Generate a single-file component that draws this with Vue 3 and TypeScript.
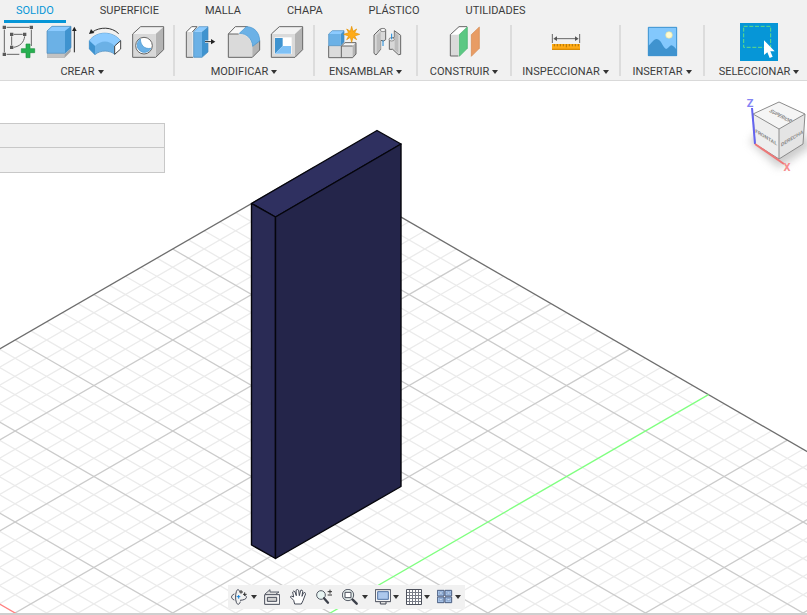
<script setup lang="ts">
import { ref } from 'vue'

interface GridLine {
  x1: number
  y1: number
  x2: number
  y2: number
  kind: 'minor' | 'major' | 'edge' | 'axis-x' | 'axis-y'
}

const tabs: string[] = ['SOLIDO', 'SUPERFICIE', 'MALLA', 'CHAPA', 'PLÁSTICO', 'UTILIDADES']
const activeTab = ref<string>('SOLIDO')

// Isometric ground plane: far corner and the step between neighbouring lines.
const corner = { x: 314.5, y: 167.1 }
const step = { x: 15.76, y: 9.1 }
const reach = 64

const minor: GridLine[] = []
const strong: GridLine[] = []

function addLine(line: GridLine): void {
  if (line.kind === 'minor') minor.push(line)
  else strong.push(line)
}

for (let k = 0; k <= reach; k++) {
  const rx = corner.x + step.x * k
  const lx = corner.x - step.x * k
  const y = corner.y + step.y * k
  addLine({
    x1: rx, y1: y, x2: rx - step.x * reach, y2: y + step.y * reach,
    kind: k === 0 ? 'edge' : k === 25 ? 'axis-y' : k % 5 === 0 ? 'major' : 'minor',
  })
  addLine({
    x1: lx, y1: y, x2: lx + step.x * reach, y2: y + step.y * reach,
    kind: k === 0 ? 'edge' : k === 34 ? 'axis-x' : k % 5 === 4 ? 'major' : 'minor',
  })
}
strong.sort((a, b) => Number(a.kind !== 'major') - Number(b.kind !== 'major'))
</script>

<template>
  <div class="app">
    <header class="ribbon">
      <nav class="tabs">
        <button
          v-for="tab in tabs"
          :key="tab"
          type="button"
          class="tab"
          :class="{ active: tab === activeTab }"
          @click="activeTab = tab"
        >{{ tab }}</button>
      </nav>

      <div class="groups">
        <section class="group first">
          <div class="icons">
            <button type="button" class="tool" aria-label="Crear boceto">
              <svg viewBox="3 75 102 102">
                <path d="M20 82H88M13 89V157M94 89V138M20 163H58M41 103H68M35 109V136M74 109C72 127 60 139 41 142" fill="none" stroke="#666" stroke-width="3" />
                <path d="M8 77h10v10H8zM89 77h10v10H89zM8 158h10v10H8zM30 98h10v10H30zM69 98h10v10H69zM30 137h10v10H30z" fill="#5a5a5a" />
                <path d="M78 132h12v14h14v12H90v15H78v-15H64v-12h14z" fill="#26b050" stroke="#1c923f" stroke-width="2" />
              </svg>
            </button>
            <button type="button" class="tool" aria-label="Extruir">
              <svg viewBox="132 75 102 102">
                <path d="M141 163H194L212 146V155L194 173H141z" fill="#a5a5a5" />
                <path d="M141 160H194V173H141z" fill="#c3c3c3" />
                <path d="M141 93L156 79H213V143L195 160H141z" fill="#6bb1e6" />
                <path d="M141 93L156 79H213L195 93z" fill="#8ccbff" />
                <path d="M195 93L213 79V143L195 160z" fill="#3f93cf" />
                <path d="M141 93L156 79H213V143L195 160H141z" fill="none" stroke="#4b87b5" stroke-width="2" />
                <path d="M223 157V88" stroke="#222" stroke-width="3" />
                <path d="M216 93L223 80L230 93z" fill="#222" />
              </svg>
            </button>
            <button type="button" class="tool" aria-label="Revolución">
              <svg viewBox="261 75 102 102">
                <path d="M356 101C335 80 300 80 277 96" fill="none" stroke="#333" stroke-width="3" />
                <path d="M267 102L273 87L283 99z" fill="#222" />
                <path d="M268 122C290 92 338 92 362 122L344 138V163C330 151 302 149 285 164L268 147z" fill="#6bb1e6" stroke="#4589bc" stroke-width="2" />
                <path d="M268 122C290 92 338 92 362 122L344 138C328 120 302 120 285 138z" fill="#8ccbff" />
                <path d="M268 122L285 138V164L268 147z" fill="#3f93cf" />
                <path d="M344 138L362 122V147L344 163z" fill="#fff" stroke="#444" stroke-width="3" />
              </svg>
            </button>
            <button type="button" class="tool" aria-label="Agujero">
              <svg viewBox="390 75 102 102">
                <path d="M398 102L422 80H491L467 102z" fill="#f2f2f2" />
                <path d="M467 102L491 80V149L467 172z" fill="#b4b4b4" />
                <path d="M398 102H467V172H398z" fill="#d8d8d8" />
                <path d="M398 102L422 80H491V149L467 172H398z" fill="none" stroke="#666" stroke-width="3" />
                <circle cx="432" cy="137" r="25" fill="#fff" stroke="#666" stroke-width="3" />
                <path d="M421 117C422 136 433 148 453 145A22 22 0 1 1 421 117z" fill="#6bb1e6" stroke="#3f93cf" stroke-width="2" />
              </svg>
            </button>
          </div>
          <button type="button" class="label">CREAR<span class="caret"></span></button>
        </section>

        <section class="group">
          <div class="icons">
            <button type="button" class="tool" aria-label="Pulsar o tirar">
              <svg viewBox="45 75 102 102">
                <path d="M52 96L68 80H84L70 96V172H52z" fill="#dadada" />
                <path d="M52 96L68 80H84L70 96z" fill="#fff" />
                <path d="M72 172H52V96L68 80H84L70 96" fill="none" stroke="#666" stroke-width="3" />
                <path d="M74 95H99V172H74z" fill="#6bb1e6" />
                <path d="M74 95L90 80H117L99 95z" fill="#8ccbff" />
                <path d="M99 95L117 80V156L99 172z" fill="#3f93cf" />
                <path d="M74 95L90 80H117V156L99 172H74z" fill="none" stroke="#4589bc" stroke-width="2" />
                <path d="M108 125H130" stroke="#fff" stroke-width="7" />
                <path d="M108 125H130" stroke="#222" stroke-width="3" />
                <path d="M126 117L139 125L126 133z" fill="#222" />
              </svg>
            </button>
            <button type="button" class="tool" aria-label="Empalme">
              <svg viewBox="174 75 102 102">
                <path d="M178 102L199 80H231L209 102z" fill="#f8f8f8" />
                <path d="M178 102H209C233 102 249 118 250 144V172H178z" fill="#dadada" />
                <path d="M250 138L272 119V150L250 172z" fill="#b4b4b4" />
                <path d="M178 102L199 80H236M178 102V172H250L272 150V122M178 102H209" fill="none" stroke="#666" stroke-width="3" />
                <path d="M211 100L232 80C255 80 272 97 272 123L251 139C249 116 234 101 211 100z" fill="#6bb1e6" stroke="#3f93cf" stroke-width="2" />
              </svg>
            </button>
            <button type="button" class="tool" aria-label="Vaciado">
              <svg viewBox="303 75 102 102">
                <path d="M307 102L331 80H401L378 102z" fill="#f2f2f2" />
                <path d="M378 102L401 80V149L378 172z" fill="#b4b4b4" />
                <path d="M307 102H378V172H307z" fill="#dadada" />
                <path d="M307 102L331 80H401V149L378 172H307z" fill="none" stroke="#666" stroke-width="3" />
                <path d="M317 112H368V162H317z" fill="#fff" />
                <path d="M318 114H341V138L318 161z" fill="#3f93cf" />
                <path d="M318 161L341 138H366V161z" fill="#7fc1f6" />
              </svg>
            </button>
          </div>
          <button type="button" class="label">MODIFICAR<span class="caret"></span></button>
        </section>

        <section class="group">
          <div class="icons">
            <button type="button" class="tool" aria-label="Nuevo componente">
              <svg viewBox="53 75 102 102">
                <path d="M58 137H130L140 128V162L130 173H58z" fill="#dcdcdc" />
                <path d="M97 137L107 128H140L130 137z" fill="#f8f8f8" />
                <path d="M130 137L140 128V162L130 173z" fill="#b4b4b4" />
                <path d="M58 137V173H130L140 162V128H107L96 138V173M96 138H130" fill="none" stroke="#666" stroke-width="3" />
                <path d="M58 102H94V137H58z" fill="#6bb1e6" />
                <path d="M58 102L69 92H104L94 102z" fill="#8ccbff" />
                <path d="M94 102L104 92V126L94 137z" fill="#3f93cf" />
                <path d="M58 102L69 92H104V126L94 137H58z" fill="none" stroke="#4589bc" stroke-width="2" />
                <path d="M127 79L131 94L142 87L136 98L151 103L136 108L142 119L131 112L127 127L123 112L112 119L118 108L103 103L118 98L112 87L123 94z" fill="#ffab16" stroke="#e49100" stroke-width="2" />
              </svg>
            </button>
            <button type="button" class="tool" aria-label="Unión">
              <svg viewBox="182 75 102 102">
                <path d="M194 105L211 88Q222 82 229 89V119Q224 126 214 121V148L200 165L194 160z" fill="#d8d8d8" stroke="#666" stroke-width="3" />
                <path d="M202 106L214 94V146L202 159z" fill="#bdbdbd" />
                <ellipse cx="221" cy="90" rx="8" ry="5" fill="#f5f5f5" stroke="#666" stroke-width="2" />
                <path d="M221 121V138" stroke="#1686d9" stroke-width="3" />
                <path d="M255 92L274 106V163L267 164L250 148H240V118L255 112z" fill="#d8d8d8" stroke="#666" stroke-width="3" />
                <path d="M256 96L267 106V158L256 149z" fill="#bdbdbd" />
                <ellipse cx="247" cy="118" rx="8" ry="5" fill="#eee" stroke="#666" stroke-width="2" />
                <path d="M247 101V118" stroke="#1686d9" stroke-width="3" />
              </svg>
            </button>
          </div>
          <button type="button" class="label">ENSAMBLAR<span class="caret"></span></button>
        </section>

        <section class="group">
          <div class="icons">
            <button type="button" class="tool" aria-label="Plano de desfase">
              <svg viewBox="412 75 102 102">
                <path d="M422 104L448 80H472L446 104V168H422z" fill="#dadada" />
                <path d="M422 104L448 80H472L446 104z" fill="#fff" />
                <path d="M446 168H422V104L448 80H472" fill="none" stroke="#666" stroke-width="3" />
                <path d="M449 104L473 81V145L449 169z" fill="#5bc883" stroke="#3fae68" stroke-width="2" />
                <path d="M485 104L509 81V145L485 169z" fill="#e89c64" stroke="#d58549" stroke-width="2" />
              </svg>
            </button>
          </div>
          <button type="button" class="label">CONSTRUIR<span class="caret"></span></button>
        </section>

        <section class="group">
          <div class="icons">
            <button type="button" class="tool" aria-label="Medir">
              <svg viewBox="147 75 102 102">
                <path d="M157 102V129M239 102V129M166 116H230" fill="none" stroke="#666" stroke-width="3" />
                <path d="M160 116L171 109V123zM236 116L225 109V123z" fill="#555" />
                <path d="M156 132H240V150H156z" fill="#ffab16" />
                <path d="M156 148H240" stroke="#d98c05" stroke-width="4" />
                <path d="M163 132v7M172 132v7M181 132v7M190 132v7M199 132v10M208 132v7M217 132v7M226 132v7M235 132v7" stroke="#8a5a00" stroke-width="2" />
              </svg>
            </button>
          </div>
          <button type="button" class="label">INSPECCIONAR<span class="caret"></span></button>
        </section>

        <section class="group">
          <div class="icons">
            <button type="button" class="tool" aria-label="Insertar imagen">
              <svg viewBox="435 75 102 102">
                <path d="M444 81H531V168H444z" fill="#83c8fd" />
                <path d="M444 138C456 130 460 117 470 117C484 118 488 142 498 147C505 147 508 136 515 136C521 137 525 145 531 149V168H444z" fill="#3f93cf" />
                <path d="M445 82H530V167H445z" fill="none" stroke="#3f93cf" stroke-width="3" />
                <circle cx="507" cy="105" r="10" fill="#fffbd0" stroke="#e2df9f" stroke-width="2" />
              </svg>
            </button>
          </div>
          <button type="button" class="label">INSERTAR<span class="caret"></span></button>
        </section>

        <section class="group last">
          <div class="icons">
            <button type="button" class="tool selected" aria-label="Seleccionar">
              <svg viewBox="720 69 114 114">
                <path d="M731 79H812V142H731z" fill="none" stroke="#62dc85" stroke-width="3" stroke-dasharray="12 5" />
                <path d="M792 121V165L802 157L809 174L818 170L811 154H824z" fill="#fff" />
              </svg>
            </button>
          </div>
          <button type="button" class="label">SELECCIONAR<span class="caret"></span></button>
        </section>
      </div>
    </header>

    <main class="viewport">
      <svg class="scene" viewBox="0 81 807 532" preserveAspectRatio="xMidYMid slice" role="img" aria-label="Modelo">
        <line v-for="(l, i) in minor" :key="'m' + i" class="minor" :x1="l.x1" :y1="l.y1" :x2="l.x2" :y2="l.y2" />
        <line v-for="(l, i) in strong" :key="'s' + i" :class="l.kind" :x1="l.x1" :y1="l.y1" :x2="l.x2" :y2="l.y2" />
        <g class="solid">
          <path d="M251.500 203.500L377 130.500L401 144L275.500 217z" fill="#2f3060" />
          <path d="M251.500 203.500L275.500 217V558.500L251.500 545z" fill="#2a2b55" />
          <path d="M275.500 217L401 144V486.500L275.500 558.500z" fill="#24254a" />
        </g>
      </svg>

      <div class="panel">
        <div class="panel-row"></div>
        <div class="panel-row"></div>
      </div>

      <svg class="cube" viewBox="740 92 67 88" role="img" aria-label="Cubo de vistas">
        <defs>
          <filter id="soft" x="-30%" y="-30%" width="160%" height="160%"><feGaussianBlur stdDeviation="4" /></filter>
        </defs>
        <path d="M750 142L779 168L812 146L800 130H760z" fill="#999" opacity="0.500" filter="url(#soft)" />
        <path d="M753 114L779 102L805 114L779 129z" fill="#f5f5f5" />
        <path d="M753 114L779 129V159L755 144z" fill="#eee" />
        <path d="M779 129L805 114L803 144L779 159z" fill="#e4e4e4" />
        <path d="M753 114L779 102L805 114L803 144L779 159L755 144zM753 114L779 129L805 114M779 129V159" fill="none" stroke="#8c8c8c" stroke-width="1" />
        <g class="cube-text">
          <text transform="translate(779 117) rotate(28) skewX(-30)">SUPERIOR</text>
          <text transform="translate(766 139) skewY(31)">FRONTAL</text>
          <text transform="translate(792 140) skewY(-31)">DERECHA</text>
        </g>
        <path d="M752 108L755 144" stroke="#6464f0" stroke-width="2" />
        <path d="M755 144L784 164" stroke="#ee7777" stroke-width="2" />
        <text x="750" y="107" class="axis-label" fill="#8484f4">Z</text>
        <text x="787" y="171" class="axis-label" fill="#f78d8d">X</text>
      </svg>

      <div class="navbar">
        <button type="button" class="wide" aria-label="Órbita">
          <svg viewBox="33 42 48 48">
            <path d="M59 50C57 42 51 42 49 50C46 60 46 73 49 82C52 90 58 90 61 80" fill="none" stroke="#454a57" stroke-width="3" />
            <path d="M43 57C32 61 32 71 43 75M76 61C84 68 77 75 60 76" fill="none" stroke="#454a57" stroke-width="3" />
            <path d="M63 45v11M58 51h11M74 52v11M69 58h11" stroke="#333" stroke-width="3" />
            <path d="M56 60v11M50 65h11" stroke="#1583d8" stroke-width="3" />
          </svg>
          <span class="caret"></span>
        </button>
        <button type="button" class="plain" aria-label="Mirar a">
          <svg viewBox="132 42 48 48">
            <path d="M134 59H179V88H134z" fill="#f7f7f7" stroke="#454a57" stroke-width="3" />
            <path d="M142 67H170V79H142z" fill="#d0d0d0" stroke="#454a57" stroke-width="3" />
            <path d="M135 57L150 44V51H177L168 57" fill="#ddd" stroke="#5b606c" stroke-width="3" />
          </svg>
        </button>
        <button type="button" class="plain" aria-label="Encuadre">
          <svg viewBox="210 42 48 48">
            <path d="M224 87L221 76L211 66Q212 60 221 66L218 51Q221 45 225 51L229 62L228 46Q232 41 236 46L238 62L242 46Q247 43 248 49L246 64L250 54Q256 50 257 56L249 77L244 87z" fill="#fff" stroke="#454a57" stroke-width="3" stroke-linejoin="round" />
          </svg>
        </button>
        <button type="button" class="plain" aria-label="Zoom">
          <svg viewBox="287 42 48 48">
            <circle cx="302" cy="60" r="13" fill="#e7f4f2" stroke="#555b66" stroke-width="3" />
            <path d="M311 70L323 83" stroke="#3b3f49" stroke-width="7" stroke-linecap="round" />
            <path d="M329 44V56M322 50H336M322 60H336" stroke="#333" stroke-width="3" />
          </svg>
        </button>
        <button type="button" class="wide" aria-label="Ajustar">
          <svg viewBox="366 42 48 48">
            <circle cx="384" cy="60" r="17" fill="#e7f0ee" stroke="#555b66" stroke-width="3" />
            <path d="M375 52H393V68H375z" fill="#fff" stroke="#454a57" stroke-width="3" />
            <path d="M398 74L410 86" stroke="#3b3f49" stroke-width="7" stroke-linecap="round" />
          </svg>
          <span class="caret"></span>
        </button>
        <button type="button" aria-label="Configuración de visualización">
          <svg viewBox="465 42 48 48">
            <path d="M466 44H512V80H466z" fill="#f5f5f5" stroke="#454a57" stroke-width="3" />
            <path d="M473 50H505V73H473z" fill="#adc8ec" stroke="#5274a3" stroke-width="3" />
            <path d="M481 81V87H498V81" fill="#ddd" stroke="#454a57" stroke-width="3" />
          </svg>
          <span class="caret"></span>
        </button>
        <button type="button" aria-label="Rejilla">
          <svg viewBox="558 42 48 48">
            <path d="M559.500 43.500H604.500V88.500H559.500z" fill="#fff" />
            <path d="M568.500 43V89M577.500 43V89M586.500 43V89M595.500 43V89M559 52.500H605M559 61.500H605M559 70.500H605M559 79.500H605" stroke="#777b86" stroke-width="3" />
            <path d="M559.500 43.500H604.500V88.500H559.500z" fill="none" stroke="#4d515c" stroke-width="3" />
          </svg>
          <span class="caret"></span>
        </button>
        <button type="button" aria-label="Ventanas">
          <svg viewBox="651 42 48 48">
            <path d="M652 46H672V63H652zM675 46H695V63H675zM652 66H672V83H652zM675 66H695V83H675z" fill="#a9c5ea" stroke="#4a5d7f" stroke-width="3" />
            <path d="M658 51H667V57H658zM681 51H690V57H681zM658 71H667V77H658zM681 71H690V77H681z" fill="#d5e4f7" stroke="#6f8fbd" stroke-width="2" />
          </svg>
          <span class="caret"></span>
        </button>
      </div>
    </main>
  </div>
</template>

<style>
body {
  margin: 0;
  background: #fff;
}
</style>

<style scoped>
.app {
  display: flex;
  flex-direction: column;
  height: 100vh;
  overflow: hidden;
  font-family: Roboto, "Liberation Sans", sans-serif;
  font-size: 11px;
  line-height: 14px;
  color: #3c3c3c;
}

button {
  margin: 0;
  padding: 0;
  border: 0;
  background: none;
  font: inherit;
  color: inherit;
}

svg {
  display: block;
}

.ribbon {
  flex: none;
  background: #f1f1f1;
  border-bottom: 1px solid #d9d9d9;
}

.tabs {
  display: flex;
  gap: 22px;
  padding-left: 4px;
}

.tab {
  box-sizing: border-box;
  height: 23px;
  padding: 2px 12px 0;
  border-bottom: 3px solid transparent;
  white-space: nowrap;
}

.tab.active {
  color: #0696d7;
  border-bottom-color: #0696d7;
}

.groups {
  display: grid;
  grid-template-columns: 175fr 140fr 103fr 94fr 109fr 84fr 102fr;
  height: 57px;
}

.group {
  position: relative;
  display: flex;
  flex-direction: column;
  align-items: center;
  gap: 4px;
  min-width: 0;
  padding-right: 2px;
}

.group::after {
  content: "";
  position: absolute;
  top: 2px;
  right: 0;
  bottom: 4px;
  width: 2px;
  background: #dcdcdc;
}

.first {
  padding-right: 11px;
}

.last {
  padding: 0 0 0 6px;
}

.last::after {
  display: none;
}

.icons {
  display: flex;
  align-items: center;
  gap: 9px;
  height: 38px;
}

.tool svg {
  width: 34px;
  height: 34px;
  overflow: visible;
}

.tool.selected {
  background: #0696d7;
}

.tool.selected svg {
  width: 38px;
  height: 38px;
}

.label {
  display: flex;
  align-items: center;
  gap: 3px;
  white-space: nowrap;
}

.caret {
  flex: none;
  border: 3px solid transparent;
  border-top: 4px solid #333;
  border-bottom: 0;
}

.viewport {
  position: relative;
  flex: 1;
  min-height: 0;
  border-bottom: 2px solid #cfcfcf;
}

.scene {
  width: 100%;
  height: 100%;
}

.scene line {
  fill: none;
  stroke-width: 1.3px;
}

.scene .minor {
  stroke: #ebebeb;
}

.scene .major {
  stroke: #cbcbcb;
}

.scene .edge {
  stroke: #6e6e6e;
}

.scene .axis-x {
  stroke: #ff8080;
}

.scene .axis-y {
  stroke: #80ff80;
}

.solid path {
  stroke: #05050c;
  stroke-width: 1.4px;
  stroke-linejoin: round;
}

.panel {
  position: absolute;
  top: 42px;
  left: 0;
  box-sizing: border-box;
  width: 165px;
  background: #f1f1f1;
  border: 1px solid #c8c8c8;
  border-left: 0;
}

.panel-row {
  height: 24px;
}

.panel-row:first-child {
  height: 23px;
  border-bottom: 1px solid #c8c8c8;
}

.cube {
  position: absolute;
  top: 11px;
  right: 0;
  width: 67px;
  height: 88px;
}

.cube-text {
  font-size: 5px;
  font-weight: 700;
  fill: #8a8a8a;
  text-anchor: middle;
}

.axis-label {
  font-size: 11px;
  font-weight: 700;
  text-anchor: middle;
}

.navbar {
  position: absolute;
  left: 228px;
  bottom: 4px;
  display: flex;
  align-items: center;
  gap: 7px;
  height: 24px;
  padding: 0 4px 0 3px;
  background: #f1f1f1;
}

.navbar button {
  display: flex;
  align-items: center;
  gap: 2px;
}

.navbar .wide {
  gap: 4px;
}

.navbar .plain {
  padding-right: 3px;
}

.navbar svg {
  width: 16px;
  height: 16px;
}
</style>
